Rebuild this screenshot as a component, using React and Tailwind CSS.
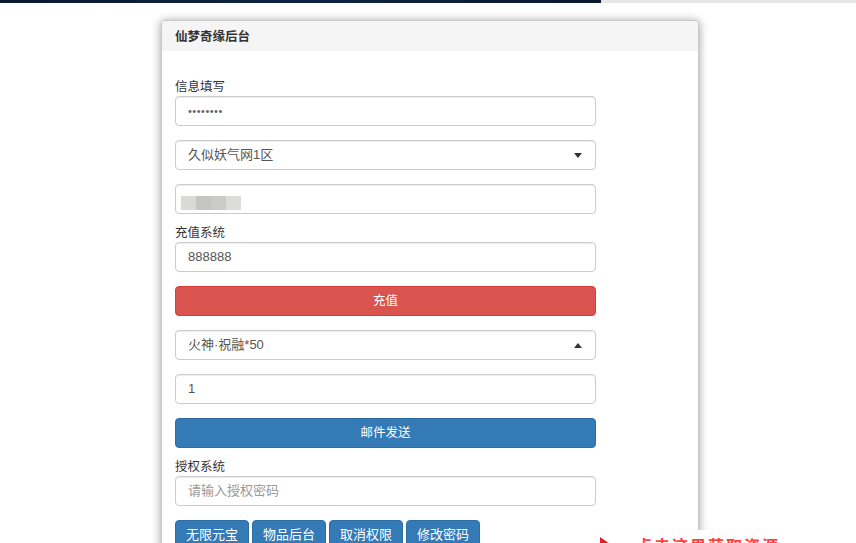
const font = { fontFamily: '"Liberation Sans", "Noto Sans CJK SC", sans-serif' };

function Field({ children, right }) {
  return (
    <div className="h-[30px] w-[421px] flex items-center justify-between px-3 border border-[#cccccc] rounded-[4px] bg-white shadow-[inset_0_1px_1px_rgba(0,0,0,0.075)] text-[13px] text-[#555]">
      <div className="flex items-center">{children}</div>
      {right}
    </div>
  );
}

function Caret({ up }) {
  return (
    <svg width="8" height="5" viewBox="0 0 8 5" className="mr-[1px]">
      {up ? <path d="M0 5 L4 0 L8 5 Z" fill="#333" /> : <path d="M0 0 L8 0 L4 5 Z" fill="#333" />}
    </svg>
  );
}

function Label({ children }) {
  return <div className="mt-[10px] h-[18px] leading-[18px] text-[12.5px] text-[#333]">{children}</div>;
}

export default function App() {
  const tools = ['无限元宝', '物品后台', '取消权限', '修改密码'];

  return (
    <div className="relative h-[543px] overflow-hidden bg-white" style={font}>
      {/* strip from the page above */}
      <div className="flex h-[3px]">
        <div className="w-[601px] bg-gradient-to-r from-[#0a1830] via-[#0d2445] to-[#0a1830]" />
        <div className="flex-1 bg-[#e6e6e6]" />
      </div>

      <div className="ml-[161px] mt-[17px] w-[538px] rounded-[4px] border border-[#c8c8c8] bg-white shadow-[0_1px_10px_rgba(0,0,0,0.4)]">
        <div className="h-[30px] px-[13px] flex items-center pt-[2px] bg-[#f5f5f5] rounded-t-[4px] text-[12.5px] font-bold text-[#333]">
          仙梦奇缘后台
        </div>

        <div className="px-[13px] pt-[17px] pb-10">
          <Label>信息填写</Label>
          <Field>
            <span className="text-[11px] tracking-[0.5px] text-[#666]">••••••••</span>
          </Field>

          <div className="mt-[14px]">
            <Field right={<Caret />}>久似妖气网1区</Field>
          </div>

          <div className="mt-[14px]">
            <Field>
              <div className="flex h-[14px] -ml-[7px] mt-[7px]">
                <div className="w-[15px] bg-[#d9d9d7]" />
                <div className="w-[15px] bg-[#c5c6c4]" />
                <div className="w-[15px] bg-[#cbcbc9]" />
                <div className="w-[15px] bg-[#dcdcda]" />
              </div>
            </Field>
          </div>

          <Label>充值系统</Label>
          <Field>888888</Field>

          <button className="mt-[14px] h-[30px] w-[421px] rounded-[4px] border border-[#d43f3a] bg-[#d9534f] text-[12.5px] text-white">
            充值
          </button>

          <div className="mt-[14px]">
            <Field right={<Caret up />}>火神·祝融*50</Field>
          </div>

          <div className="mt-[14px]">
            <Field>1</Field>
          </div>

          <button className="mt-[14px] h-[30px] w-[421px] rounded-[4px] border border-[#2e6da4] bg-[#337ab7] text-[12.5px] text-white">
            邮件发送
          </button>

          <Label>授权系统</Label>
          <Field>
            <span className="text-[#999]">请输入授权密码</span>
          </Field>

          <div className="mt-[14px] flex gap-[3px]">
            {tools.map((t) => (
              <button
                key={t}
                className="h-[30px] w-[74px] rounded-[4px] border border-[#2e6da4] bg-[#337ab7] text-[13px] text-white"
              >
                {t}
              </button>
            ))}
          </div>
        </div>
      </div>

      {/* pasted fragment of another screenshot at the bottom edge */}
      <div className="absolute left-[590px] top-[530px] right-0 bottom-0 bg-white overflow-hidden">
        <svg width="12" height="14" viewBox="0 0 12 14" className="absolute left-[9px] top-[7px]">
          <path d="M1 0 L11 7 L1 14 Z" fill="#e02020" />
        </svg>
        <div className="absolute left-[46px] top-[9px] text-[16px] font-bold leading-none text-[#ff4040] tracking-[2px]">
          点击这里获取资源
        </div>
      </div>
    </div>
  );
}
